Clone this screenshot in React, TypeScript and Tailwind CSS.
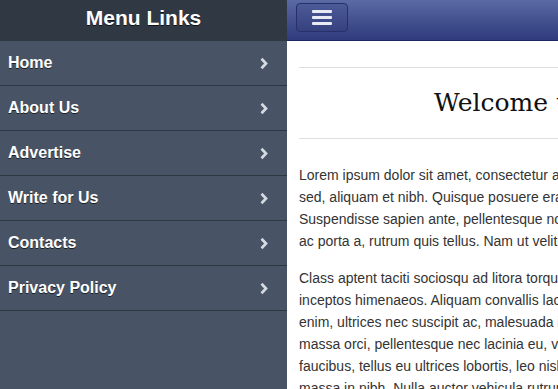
import React from "react";

const items = ["Home", "About Us", "Advertise", "Write for Us", "Contacts", "Privacy Policy"];

function Chevron() {
  return (
    <svg width="10" height="13" viewBox="0 0 10 13" className="shrink-0">
      <path d="M2.5 1.8 L7 6.5 L2.5 11.2" fill="none" stroke="#d5d9e0" strokeWidth="2.7" />
    </svg>
  );
}

export default function App() {
  return (
    <div className="w-[558px] h-[389px] overflow-hidden flex" style={{ fontFamily: "'Liberation Sans', Arial, sans-serif" }}>
      <div className="w-[287px] shrink-0 h-full bg-[#485465] flex flex-col">
        <div className="h-[41px] bg-[#2f3843] flex items-center justify-center text-white font-bold text-[21px] [text-shadow:0_1px_0_#111] pb-[5px]">
          Menu Links
        </div>
        {items.map((t) => (
          <div key={t} className="h-[45px] border-b border-[#2e3742] flex items-center justify-between pl-[8px] pr-[18px]">
            <span className="text-white font-bold text-[16px] [text-shadow:0_1px_0_#1a1f26] -mt-[1px]">{t}</span>
            <Chevron />
          </div>
        ))}
      </div>
      <div className="w-[558px] shrink-0 h-full bg-white flex flex-col">
        <div className="h-[41px] shrink-0 bg-gradient-to-b from-[#5b69a4] to-[#2f3b7c] border-b border-[#1d2660] flex items-start pl-[9px] pt-[3px]">
          <div className="w-[52px] h-[29px] rounded-[4px] border border-[#27306a] bg-gradient-to-b from-[#4d5a98] to-[#35427f] flex flex-col items-center justify-center gap-[3px]">
            <div className="w-[20px] h-[3px] bg-[#e8ebf3] rounded-[1px]" />
            <div className="w-[20px] h-[3px] bg-[#e8ebf3] rounded-[1px]" />
            <div className="w-[20px] h-[3px] bg-[#e8ebf3] rounded-[1px]" />
          </div>
        </div>
        <div className="px-[12px] pt-[26px]">
          <div className="border-t border-[#dddddd]" />
          <div className="h-[70px] flex items-center justify-start pl-[135px]">
            <h1 className="text-[25px] text-[#111] whitespace-nowrap" style={{ fontFamily: "'DejaVu Serif', 'Liberation Serif', serif" }}>
              Welcome to My Website
            </h1>
          </div>
          <div className="border-t border-[#dddddd]" />
          <div className="pt-[25px] text-[14px] leading-[22px] text-[#333] whitespace-nowrap">
            <p>
              Lorem ipsum dolor sit amet, consectetur adipiscing elit. Nunc<br />
              sed, aliquam et nibh. Quisque posuere erat vitae nisi ullamcorper.<br />
              Suspendisse sapien ante, pellentesque non lectus eget, feugiat<br />
              ac porta a, rutrum quis tellus. Nam ut velit eget lorem.
            </p>
            <p className="mt-[15px]">
              Class aptent taciti sociosqu ad litora torquent per conubia nostra, per<br />
              inceptos himenaeos. Aliquam convallis lacus at lacus dapibus,<br />
              enim, ultrices nec suscipit ac, malesuada id sapien. Donec<br />
              massa orci, pellentesque nec lacinia eu, viverra sed ligula.<br />
              faucibus, tellus eu ultrices lobortis, leo nisl elementum nunc<br />
              massa in nibh. Nulla auctor vehicula rutrum.
            </p>
          </div>
        </div>
      </div>
    </div>
  );
}
